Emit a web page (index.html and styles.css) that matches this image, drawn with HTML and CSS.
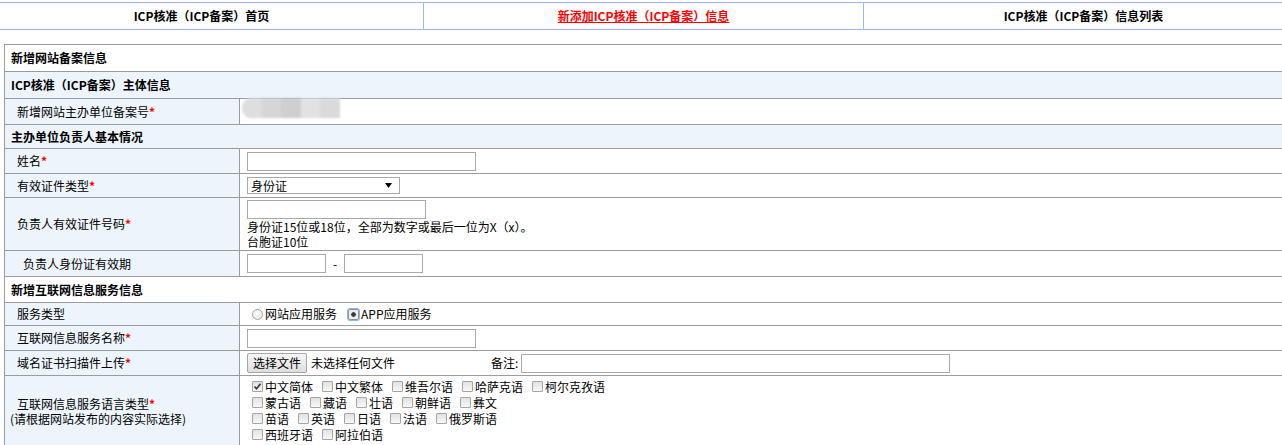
FILE: index.html
```html
<!DOCTYPE html>
<html lang="zh-CN">
<head>
<meta charset="utf-8">
<title>新添加ICP核准（ICP备案）信息</title>
<link rel="stylesheet" href="styles.css">
</head>
<body>
<div class="page">
  <nav class="topnav">
    <a class="tab tab-home" href="#">ICP核准（ICP备案）首页</a>
    <a class="tab tab-current" href="#">新添加ICP核准（ICP备案）信息</a>
    <a class="tab tab-list" href="#">ICP核准（ICP备案）信息列表</a>
  </nav>

  <table class="form">
    <colgroup><col class="col-label"><col class="col-value"></colgroup>
    <tr class="h27 row-title"><th colspan="2">新增网站备案信息</th></tr>
    <tr class="h27 row-section"><th colspan="2">ICP核准（ICP备案）主体信息</th></tr>
    <tr class="h26">
      <td class="label">新增网站主办单位备案号<em class="req">*</em></td>
      <td class="value value-top"><span class="masked"><span class="m1"></span><span class="m2"></span><span class="m3"></span><span class="m4"></span><span class="m5"></span></span></td>
    </tr>
    <tr class="h24 row-section"><th colspan="2">主办单位负责人基本情况</th></tr>
    <tr class="h25">
      <td class="label">姓名<em class="req">*</em></td>
      <td class="value"><input class="text w229" type="text"></td>
    </tr>
    <tr class="h24">
      <td class="label">有效证件类型<em class="req">*</em></td>
      <td class="value">
        <select class="pick">
          <option>身份证</option>
          <option>台胞证</option>
          <option>护照</option>
        </select>
      </td>
    </tr>
    <tr class="h53">
      <td class="label">负责人有效证件号码<em class="req">*</em></td>
      <td class="value">
        <input class="text w179 block" type="text">
        <div class="hint">身份证15位或18位，全部为数字或最后一位为X（x）。</div>
        <div class="hint">台胞证10位</div>
      </td>
    </tr>
    <tr class="h26">
      <td class="label label-indent">负责人身份证有效期</td>
      <td class="value">
        <span class="range"><input class="text w79" type="text"><span class="dash">-</span><input class="text w79" type="text"></span>
      </td>
    </tr>
    <tr class="h26 row-plain"><th colspan="2">新增互联网信息服务信息</th></tr>
    <tr class="h23">
      <td class="label">服务类型</td>
      <td class="value">
        <span class="choices">
          <label class="opt"><input class="radio" type="radio" name="svc">网站应用服务</label>
          <label class="opt"><input class="radio focus" type="radio" name="svc" checked>APP应用服务</label>
        </span>
      </td>
    </tr>
    <tr class="h25">
      <td class="label">互联网信息服务名称<em class="req">*</em></td>
      <td class="value"><input class="text w229" type="text"></td>
    </tr>
    <tr class="h25">
      <td class="label">域名证书扫描件上传<em class="req">*</em></td>
      <td class="value">
        <span class="upload">
          <button class="file-btn" type="button">选择文件</button>
          <span class="file-name">未选择任何文件</span>
          <span class="remark">备注:</span>
          <input class="text w429" type="text">
        </span>
      </td>
    </tr>
    <tr class="h70">
      <td class="label">
        <div class="lang-title">互联网信息服务语言类型<em class="req">*</em></div>
        <div class="lang-note">(请根据网站发布的内容实际选择)</div>
      </td>
      <td class="value">
        <div class="langs">
          <div class="lang-line">
            <label class="chk"><input class="box" type="checkbox" checked>中文简体</label>
            <label class="chk"><input class="box" type="checkbox">中文繁体</label>
            <label class="chk"><input class="box" type="checkbox">维吾尔语</label>
            <label class="chk"><input class="box" type="checkbox">哈萨克语</label>
            <label class="chk"><input class="box" type="checkbox">柯尔克孜语</label>
          </div>
          <div class="lang-line">
            <label class="chk"><input class="box" type="checkbox">蒙古语</label>
            <label class="chk"><input class="box" type="checkbox">藏语</label>
            <label class="chk"><input class="box" type="checkbox">壮语</label>
            <label class="chk"><input class="box" type="checkbox">朝鲜语</label>
            <label class="chk"><input class="box" type="checkbox">彝文</label>
          </div>
          <div class="lang-line">
            <label class="chk"><input class="box" type="checkbox">苗语</label>
            <label class="chk"><input class="box" type="checkbox">英语</label>
            <label class="chk"><input class="box" type="checkbox">日语</label>
            <label class="chk"><input class="box" type="checkbox">法语</label>
            <label class="chk"><input class="box" type="checkbox">俄罗斯语</label>
          </div>
          <div class="lang-line">
            <label class="chk"><input class="box" type="checkbox">西班牙语</label>
            <label class="chk"><input class="box" type="checkbox">阿拉伯语</label>
          </div>
        </div>
      </td>
    </tr>
  </table>
</div>
</body>
</html>
```

FILE: styles.css
```css
html {
  overflow: hidden;
}

body {
  margin: 0;
  background: #fff;
  color: #000;
  font-family: "Noto Sans CJK SC", "Noto Sans", "Liberation Sans", sans-serif;
  font-size: 12px;
  line-height: 14px;
}

.page {
  width: 1303px;
  padding-top: 2px;
}

/* ---- top tab bar ---- */
.topnav {
  display: flex;
  height: 26px;
  border-top: 1px solid #9fb9e8;
  border-bottom: 1px solid #9fb9e8;
}

.tab {
  display: flex;
  align-items: center;
  justify-content: center;
  color: #000;
  font-weight: bold;
  text-decoration: none;
}

.tab-home {
  width: 403px;
  padding-right: 20px;
  border-right: 1px solid #9fb9e8;
}

.tab-current {
  width: 439px;
  border-right: 1px solid #9fb9e8;
  color: #f00;
  text-decoration: underline;
}

.tab-list {
  flex: 1;
}

/* ---- form table ---- */
.form {
  margin: 14px 0 0 4px;
  width: 1299px;
  border-collapse: collapse;
  table-layout: fixed;
}

.col-label {
  width: 235px;
}

.form th,
.form td {
  border: 1px solid #9c9c9c;
  padding: 0;
  text-align: left;
  vertical-align: middle;
}

.form th {
  padding-left: 6px;
  font-weight: bold;
}

.row-title th,
.row-plain th {
  background: #fff;
}

.row-section th {
  background: #eef4fc;
}

.h23 { height: 23px; }
.h24 { height: 24px; }
.h25 { height: 25px; }
.h26 { height: 26px; }
.h27 { height: 27px; }
.h53 { height: 53px; }
.h70 { height: 70px; }

.label {
  background: #eef4fc;
  padding-left: 12px !important;
}

.label-indent {
  padding-left: 18px !important;
}

.req {
  color: #f00;
  font-style: normal;
  font-weight: bold;
}

.value {
  background: #fff;
  padding-left: 7px !important;
}

.value-top {
  vertical-align: top !important;
  padding-left: 2px !important;
}

/* blurred record number */
.masked {
  display: flex;
  margin-top: -1px;
  height: 20px;
  width: 98px;
  filter: blur(0.8px);
}

.masked span {
  flex: 1;
}

.masked .m1 { background: #dedede; border-radius: 9px 0 0 9px; }
.masked .m2 { background: #d6d6d6; }
.masked .m3 { background: #cfcfcf; }
.masked .m4 { background: #e2e2e2; }
.masked .m5 { background: #dadada; }

/* ---- inputs ---- */
.text {
  box-sizing: border-box;
  height: 19px;
  margin: 0;
  padding: 0 2px;
  border: 1px solid #a9a9a9;
  background: #fff;
  font: inherit;
  vertical-align: middle;
}

.block {
  display: block;
}

.w79 { width: 79px; }
.w179 { width: 179px; }
.w229 { width: 229px; }
.w429 { width: 429px; }

.pick {
  box-sizing: border-box;
  display: block;
  width: 153px;
  height: 17px;
  margin: 0;
  padding: 0 0 0 3px;
  border: 1px solid #a9a9a9;
  border-radius: 0;
  font: inherit;
  line-height: 15px;
  color: #000;
  -webkit-appearance: none;
  appearance: none;
  background: #fff url("data:image/svg+xml,%3Csvg xmlns='http://www.w3.org/2000/svg' width='7' height='5'%3E%3Cpath d='M0 0h7L3.5 5z' fill='%23000'/%3E%3C/svg%3E") no-repeat right 7px center;
}

.hint {
  line-height: 15px;
}

.range {
  display: flex;
  align-items: center;
}

.dash {
  width: 18px;
  text-align: center;
}

/* ---- radios ---- */
.choices {
  display: flex;
  align-items: center;
}

.opt {
  display: flex;
  align-items: center;
  margin-left: 5px;
  margin-right: 6px;
}

.radio {
  -webkit-appearance: none;
  appearance: none;
  box-sizing: border-box;
  width: 11px;
  height: 11px;
  margin: 0 2px 0 0;
  border: 1px solid #a3a3a3;
  border-radius: 50%;
  background: radial-gradient(circle at 50% 35%, #fff, #e4e4e4);
}

.radio:checked {
  background: radial-gradient(circle, #3a3a3a 0 2px, #e6e6e6 2.5px, #f6f6f6);
}

.radio.focus {
  box-shadow: 0 0 0 1px #8ab8ee;
  border-radius: 2px;
  border-color: #8f8f8f;
}

/* ---- upload ---- */
.upload {
  display: flex;
  align-items: center;
}

.file-btn {
  box-sizing: border-box;
  height: 20px;
  margin: 0;
  padding: 0 5px;
  border: 1px solid #a6a6a6;
  border-radius: 2px;
  background: linear-gradient(#f6f6f6, #dedede);
  font: inherit;
  color: #000;
}

.file-name {
  margin-left: 4px;
}

.remark {
  margin-left: 96px;
  margin-right: 3px;
}

/* ---- language checkboxes ---- */
.lang-title {
  line-height: 15px;
}

.lang-note {
  margin-left: -7px;
  line-height: 15px;
}

.lang-line {
  display: flex;
  align-items: center;
  height: 16px;
}

.chk {
  display: flex;
  align-items: center;
  margin-left: 5px;
  margin-right: 4px;
}

.box {
  -webkit-appearance: none;
  appearance: none;
  box-sizing: border-box;
  width: 11px;
  height: 11px;
  margin: 0 2px 0 0;
  border: 1px solid #a5a5a5;
  border-radius: 1px;
  background: linear-gradient(#e2e2e2, #f8f8f8);
}

.box:checked {
  background: url("data:image/svg+xml,%3Csvg xmlns='http://www.w3.org/2000/svg' width='9' height='9'%3E%3Cpath d='M1.5 4.5l2 2.2 4-5' fill='none' stroke='%23333' stroke-width='1.6'/%3E%3C/svg%3E") no-repeat center, linear-gradient(#e2e2e2, #f8f8f8);
}
```
